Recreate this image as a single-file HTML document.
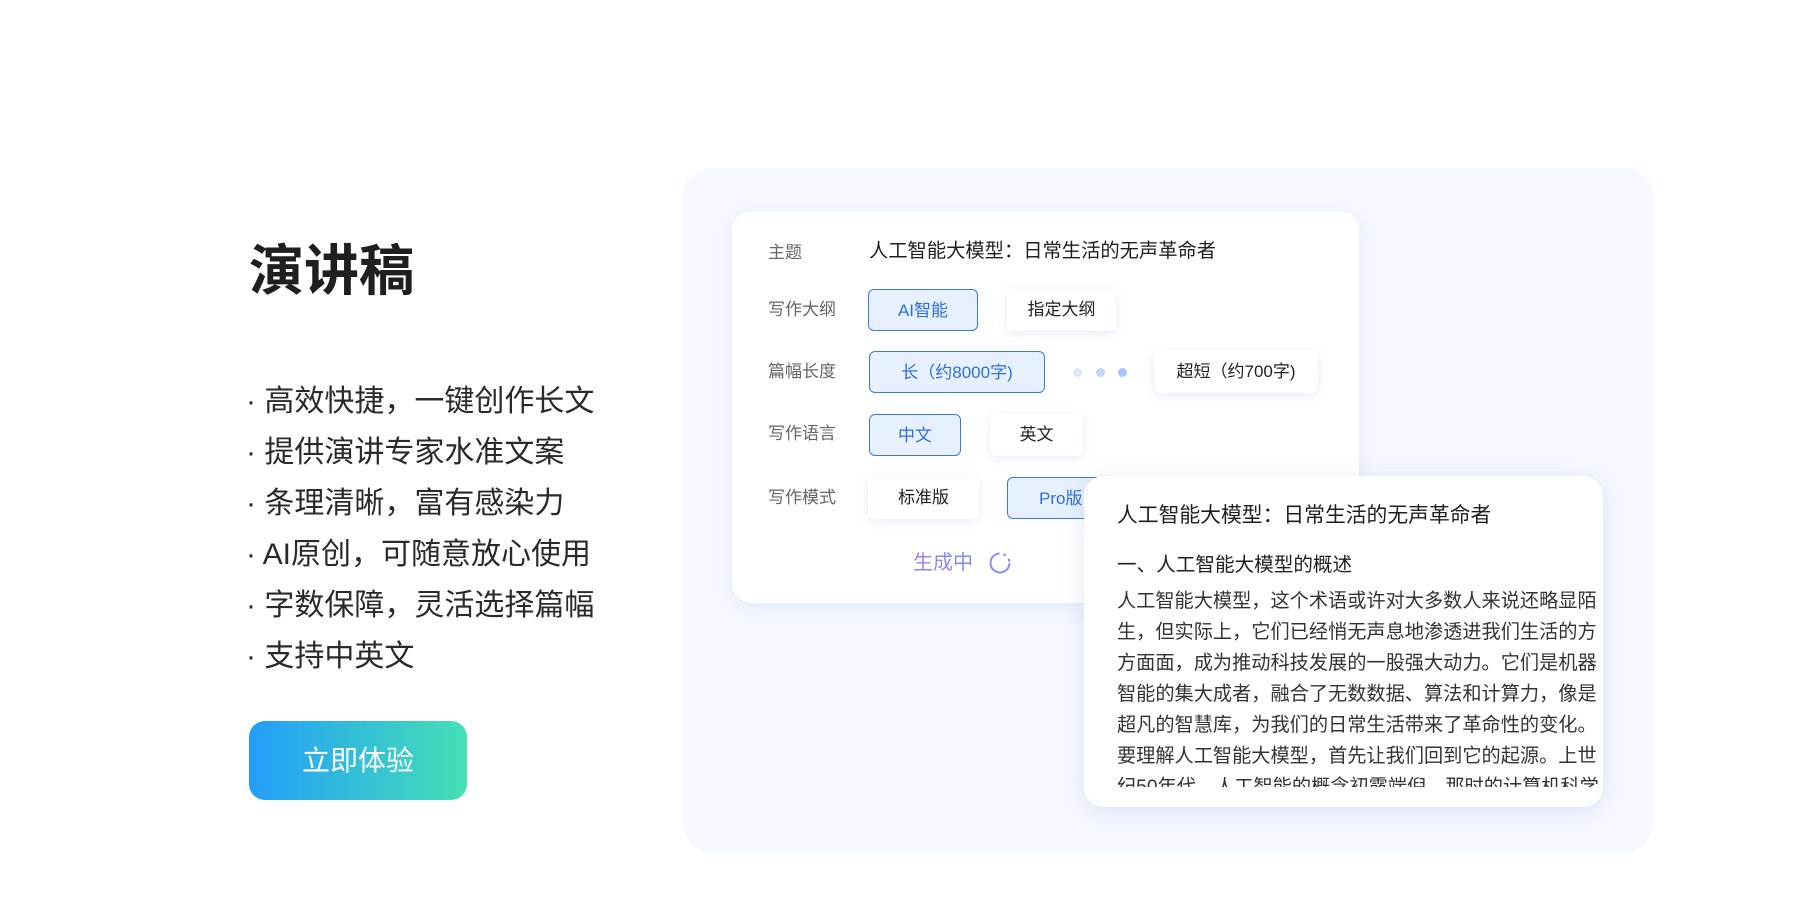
<!DOCTYPE html>
<html><head><meta charset="utf-8"><style>
*{margin:0;padding:0;box-sizing:border-box}
body{width:1800px;height:899px;background:#fff;position:relative;overflow:hidden;font-family:"Liberation Sans","Noto Sans CJK SC",sans-serif;color:#222}
.a{position:absolute;white-space:nowrap}
.title{left:249px;top:236px;font-size:55px;font-weight:bold;color:#1f1f1f;line-height:70px}
.bul{left:246px;font-size:30px;color:#2a2a2a;line-height:40px}
.btn{left:249px;top:721px;width:218px;height:79px;border-radius:16px;background:linear-gradient(90deg,#239ef9,#44e0b5);color:#fff;font-size:28px;text-align:center;line-height:79px}
.panel{left:683px;top:168px;width:970px;height:684px;border-radius:28px;background:#f5f8fe}
.card{background:#fff;border-radius:20px;box-shadow:0 4px 20px rgba(90,120,200,.12)}
.lab{font-size:17px;color:#666;line-height:24px}
.opt{height:42px;border-radius:6px;font-size:17px;text-align:center;line-height:41px;color:#222;background:#fff;box-shadow:0 2px 10px rgba(80,110,180,.15)}
.sel{background:#e7f0fe;border:1.5px solid #3a78e6;color:#2f6fe0;box-shadow:none}
.dot{width:9px;height:9px;border-radius:50%}
.p{left:1117px;font-size:19.2px;color:#333;line-height:31px}
</style></head><body>
<div class="a title">演讲稿</div>
<div class="a bul" style="top:382px">· 高效快捷，一键创作长文</div>
<div class="a bul" style="top:433px">· 提供演讲专家水准文案</div>
<div class="a bul" style="top:484px">· 条理清晰，富有感染力</div>
<div class="a bul" style="top:535px">· AI原创，可随意放心使用</div>
<div class="a bul" style="top:586px">· 字数保障，灵活选择篇幅</div>
<div class="a bul" style="top:637px">· 支持中英文</div>
<div class="a btn">立即体验</div>

<div class="a panel"></div>
<div class="a card" style="left:732px;top:211px;width:627px;height:392px"></div>
<div class="a lab" style="left:768px;top:241px">主题</div>
<div class="a" style="left:869px;top:238px;font-size:19.3px;line-height:28px;color:#1f1f1f">人工智能大模型：日常生活的无声革命者</div>
<div class="a lab" style="left:768px;top:298px">写作大纲</div>
<div class="a opt sel" style="left:868px;top:289px;width:110px">AI智能</div>
<div class="a opt" style="left:1007px;top:289px;width:109px">指定大纲</div>
<div class="a lab" style="left:768px;top:360px">篇幅长度</div>
<div class="a opt sel" style="left:869px;top:351px;width:176px">长（约8000字)</div>
<div class="a dot" style="left:1073px;top:368px;background:#dfe8fb"></div>
<div class="a dot" style="left:1096px;top:368px;background:#c4d6fa"></div>
<div class="a dot" style="left:1118px;top:368px;background:#a9c4f8"></div>
<div class="a opt" style="left:1154px;top:351px;width:164px">超短（约700字)</div>
<div class="a lab" style="left:768px;top:422px">写作语言</div>
<div class="a opt sel" style="left:869px;top:414px;width:92px">中文</div>
<div class="a opt" style="left:990px;top:414px;width:93px">英文</div>
<div class="a lab" style="left:768px;top:486px">写作模式</div>
<div class="a opt" style="left:868px;top:477px;width:111px">标准版</div>
<div class="a opt sel" style="left:1007px;top:477px;width:110px;text-align:left;padding-left:31px">Pro版</div>
<div class="a" style="left:913px;top:549px;font-size:20px;line-height:28px;background:linear-gradient(90deg,#a47cf0,#7a8ef2);-webkit-background-clip:text;color:transparent">生成中</div>
<svg class="a" style="left:988px;top:551px" width="24" height="24" viewBox="0 0 24 24"><circle cx="12" cy="12" r="9.5" fill="none" stroke="#8c8df0" stroke-width="2" stroke-dasharray="44 4 3 4 3 4"/></svg>

<div class="a card" style="left:1084px;top:476px;width:519px;height:331px;box-shadow:0 4px 24px rgba(90,120,200,.16)"></div>
<div class="a" style="left:1117px;top:501px;font-size:20.8px;line-height:30px;color:#1f1f1f">人工智能大模型：日常生活的无声革命者</div>
<div class="a" style="left:1117px;top:550px;font-size:19.6px;line-height:30px;color:#1f1f1f">一、人工智能大模型的概述</div>
<div class="a" style="left:1117px;top:586px;width:486px;height:201px;overflow:hidden">
<div class="a p" style="left:0;top:0">人工智能大模型，这个术语或许对大多数人来说还略显陌</div>
<div class="a p" style="left:0;top:31px">生，但实际上，它们已经悄无声息地渗透进我们生活的方</div>
<div class="a p" style="left:0;top:62px">方面面，成为推动科技发展的一股强大动力。它们是机器</div>
<div class="a p" style="left:0;top:93px">智能的集大成者，融合了无数数据、算法和计算力，像是</div>
<div class="a p" style="left:0;top:124px">超凡的智慧库，为我们的日常生活带来了革命性的变化。</div>
<div class="a p" style="left:0;top:155px">要理解人工智能大模型，首先让我们回到它的起源。上世</div>
<div class="a p" style="left:0;top:186px">纪50年代，人工智能的概念初露端倪，那时的计算机科学</div>
</div>
</body></html>
